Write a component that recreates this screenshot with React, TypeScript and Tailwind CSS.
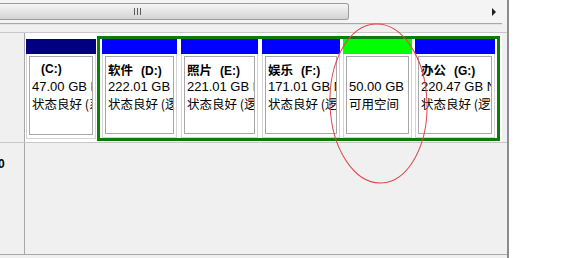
import React from "react";

type Part = {
  name?: string;
  drive?: string;
  size: string;
  status: string;
  color: string;
  width: string;
};

const parts: Part[] = [
  { name: "软件", drive: "(D:)", size: "222.01 GB NTFS", status: "状态良好 (逻辑驱动器)", color: "bg-[#0000ff]", width: "w-[75px]" },
  { name: "照片", drive: "(E:)", size: "221.01 GB NTFS", status: "状态良好 (逻辑驱动器)", color: "bg-[#0000ff]", width: "w-[77px]" },
  { name: "娱乐", drive: "(F:)", size: "171.01 GB NTFS", status: "状态良好 (逻辑驱动器)", color: "bg-[#0000ff]", width: "w-[78px]" },
  { size: "50.00 GB", status: "可用空间", color: "bg-[#00ff00]", width: "w-[69px]" },
  { name: "办公", drive: "(G:)", size: "220.47 GB NTFS", status: "状态良好 (逻辑驱动器)", color: "bg-[#0000ff]", width: "w-[80px]" },
];

const cjk = "text-[12.5px] [font-family:'Noto_Sans_CJK_SC',sans-serif]";

function Body({ label, size, status }: { label: React.ReactNode; size: string; status: string }) {
  return (
    <div className="flex-1 bg-white border-x border-b border-[#d4d4d4] px-[2px] pt-[2px] pb-[3px] flex">
      <div className="flex-1 border border-[#a8a8a8] overflow-hidden whitespace-nowrap pl-[2px] pt-[4px] text-[13px] leading-[17px] text-black">
        <div className="h-[17px] font-bold text-[12px]">{label}</div>
        <div className="h-[17px]">{size}</div>
        <div className={`h-[17px] ${cjk}`}>{status}</div>
      </div>
    </div>
  );
}

function Partition({ p }: { p: Part }) {
  return (
    <div className={`${p.width} flex flex-col shrink-0`}>
      <div className={`h-[15px] ${p.color}`} />
      <Body
        label={
          p.drive ? (
            <>
              <span className={cjk}>{p.name}</span>
              <span className="ml-[8px]">{p.drive}</span>
            </>
          ) : null
        }
        size={p.size}
        status={p.status}
      />
    </div>
  );
}

export default function App() {
  return (
    <div
      className="relative w-[579px] h-[258px] overflow-hidden bg-white flex"
      style={{ fontFamily: '"Liberation Sans", "Noto Sans CJK SC", sans-serif' }}
    >
      <div className="w-[507px] h-full flex flex-col bg-[#f0f0f0]">
        {/* horizontal scrollbar */}
        <div className="h-[23px] flex items-start pt-[3px] bg-[#f4f4f4]">
          <div className="w-[349px] h-[17px] rounded-r-[3px] border border-l-0 border-[#9c9c9c] bg-gradient-to-b from-[#f6f6f6] to-[#d3d3d3] flex items-center pl-[134px]">
            <div className="flex gap-[2px] h-[7px]">
              <div className="w-px bg-[#5a5a5a]" />
              <div className="w-px bg-[#5a5a5a]" />
              <div className="w-px bg-[#5a5a5a]" />
            </div>
          </div>
          <div className="flex-1 h-[17px] flex items-center justify-end pr-[10px]">
            <svg width="5" height="8" viewBox="0 0 5 8">
              <polygon points="0,0 4,4 0,8" fill="#202020" />
            </svg>
          </div>
        </div>
        <div className="h-[2px] mr-[5px] border-t border-[#a8a8a8] bg-[#e4e4e4]" />
        <div className="h-[7px]" />

        {/* disk row */}
        <div className="h-[111px] flex border-t border-b border-[#c8c8c8]">
          <div className="w-[25px] border-r border-[#a8a8a8] bg-[#f0f0f0]" />
          <div className="w-[477px] bg-white flex pt-[3px] pl-px">
            <div className="w-[70px] flex py-[3px]">
              <div className="w-[70px] flex flex-col">
                <div className="h-[15px] bg-[#000080]" />
                <Body label={<span className="ml-[9px]">(C:)</span>} size="47.00 GB NTFS" status="状态良好 (系统, 启动)" />
              </div>
            </div>
            <div className="ml-px w-[403px] h-[105px] border-[3px] border-[#0b7d0b] flex px-[2px] gap-[4px]">
              <Partition p={parts[0]} />
              <Partition p={parts[1]} />
              <Partition p={parts[2]} />
              <div className="-ml-px flex">
                <Partition p={parts[3]} />
              </div>
              <div className="-ml-px flex">
                <Partition p={parts[4]} />
              </div>
            </div>
          </div>
        </div>

        {/* second row */}
        <div className="h-[112px] flex border-b border-[#a8a8a8]">
          <div className="w-[25px] border-r border-[#a8a8a8] pt-[13px] overflow-hidden">
            <div className="-ml-[2px] text-[12px] leading-[17px] font-bold text-black">0</div>
          </div>
          <div className="w-[477px] bg-[#f0f0f0]" />
        </div>
      </div>
      <div className="w-[2px] h-full bg-[#8c8c8c]" />
      <div className="flex-1 bg-white" />

      {/* red annotation ellipse */}
      <svg className="absolute left-0 top-0 pointer-events-none" width="579" height="258">
        <ellipse
          cx="378.5"
          cy="103.5"
          rx="48.5"
          ry="79.5"
          fill="none"
          stroke="#e2474a"
          strokeWidth="1"
          transform="rotate(-2 378.5 103.5)"
        />
      </svg>
    </div>
  );
}
